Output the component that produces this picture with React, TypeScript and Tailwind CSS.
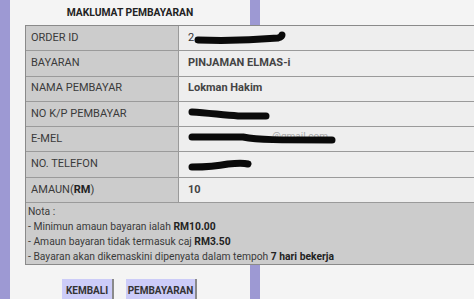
import React from 'react';

type Row = { label: React.ReactNode; value: React.ReactNode };

// redaction scribble drawn over a value
function Scribble({ w, d, children }: { w: number; d: string; children?: React.ReactNode }) {
  return (
    <span className="relative inline-flex items-center h-[14px]" style={{ width: w }}>
      {children}
      <svg className="absolute left-0 top-0" width={w} height={14} viewBox={`0 0 ${w} 14`}>
        <path d={d} stroke="#0a0a0a" strokeWidth={7} strokeLinecap="round" fill="none" />
      </svg>
    </span>
  );
}

const rows: Row[] = [
  {
    label: 'ORDER ID',
    value: (
      <span className="inline-flex items-center">
        <span>2</span>
        <Scribble w={92} d="M4 9 C 30 10, 60 9, 84 7 C 87 6, 88 5, 88 4" />
      </span>
    ),
  },
  { label: 'BAYARAN', value: <span className="font-bold text-[#444]">PINJAMAN ELMAS-i</span> },
  { label: 'NAMA PEMBAYAR', value: <span className="font-bold text-[#444]">Lokman Hakim</span> },
  {
    label: 'NO K/P PEMBAYAR',
    value: <Scribble w={82} d="M4 5 C 20 6, 35 8, 50 9 C 62 9, 72 9, 78 9" />,
  },
  {
    label: 'E-MEL',
    value: (
      <Scribble w={148} d="M4 5 C 20 5, 40 5, 55 5 C 70 8, 90 8, 144 8">
        <span className="absolute left-[84px] top-[0px] text-[10px] leading-[10px] text-[#aaa]">@gmail.com</span>
      </Scribble>
    ),
  },
  {
    label: 'NO. TELEFON',
    value: <Scribble w={64} d="M4 9 C 20 9, 30 8, 40 6 C 50 5, 56 5, 60 6" />,
  },
  {
    label: (
      <span>
        AMAUN(<b className="font-bold text-[#222]">RM</b>)
      </span>
    ),
    value: <span className="font-bold text-[#444]">10</span>,
  },
];

export default function App() {
  return (
    <div className="relative flex h-[299px] w-[474px] overflow-hidden bg-[#f4f4f4] text-[11px] text-[#333] [font-family:Roboto,'Liberation_Sans',sans-serif]">
      <div className="w-[10px] shrink-0 bg-[#9d99d3]" />
      <div className="absolute left-[250px] top-0 bottom-0 w-[10px] bg-[#9d99d3]" />

      <div className="relative flex-1 pl-[15px]">
        <div className="flex h-[25px] w-[210px] items-center justify-center pt-[1px] text-[10.3px] font-bold text-[#222]">
          MAKLUMAT PEMBAYARAN
        </div>

        <div className="w-[460px] border border-[#8a8a8a] bg-[#eeeeee]">
          {rows.map((r, i) => (
            <div key={i} className="grid h-[25.3px] grid-cols-[153px_1fr] border-b border-[#9a9a9a]">
              <div className="flex items-center border-r border-[#9a9a9a] bg-[#cccccc] pl-[5px] text-[#3a3a3a]">
                {r.label}
              </div>
              <div className="flex items-center pl-[9px] text-[#333]">{r.value}</div>
            </div>
          ))}
          <div className="bg-[#cccccc] pl-[2px] pt-[1px] text-[10.3px] leading-[15px] text-[#3a3a3a]">
            <p>Nota :</p>
            <p>
              - Minimun amaun bayaran ialah <b className="font-bold text-[#222]">RM10.00</b>
            </p>
            <p>
              - Amaun bayaran tidak termasuk caj <b className="font-bold text-[#222]">RM3.50</b>
            </p>
            <p>
              - Bayaran akan dikemaskini dipenyata dalam tempoh{' '}
              <b className="font-bold text-[#222]">7 hari bekerja</b>
            </p>
          </div>
        </div>

        <div className="mt-[14px] flex gap-[12px] pl-[37px]">
          <button className="h-[28px] w-[52px] border-b-2 border-r-2 border-[#8a8a8a] bg-[#ccccf8] pb-[3px] text-[10px] font-bold text-[#333]">
            KEMBALI
          </button>
          <button className="h-[28px] w-[71px] border-b-2 border-r-2 border-[#8a8a8a] bg-[#ccccf8] pb-[3px] text-[10px] font-bold text-[#333]">
            PEMBAYARAN
          </button>
        </div>
      </div>
    </div>
  );
}
